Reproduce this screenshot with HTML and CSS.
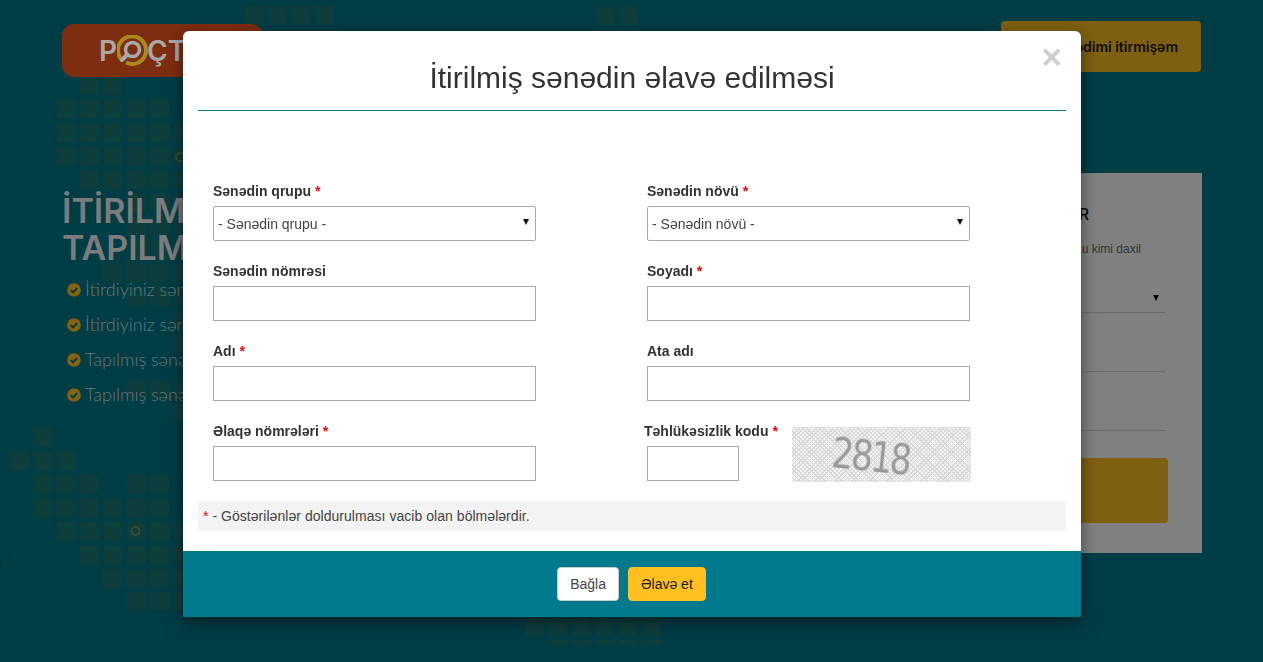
FILE: index.html
```html
<!DOCTYPE html>
<html lang="az">
<head>
<meta charset="utf-8">
<title>İtirilmiş sənədin əlavə edilməsi</title>
<link rel="stylesheet" href="styles.css">
</head>
<body>
<svg class="tiles" width="1263" height="662" viewBox="0 0 1263 662" aria-hidden="true">
  <g class="tile-rows">
    <path d="M268 -9H290"/>
    <path d="M245 15H338M596 16H638"/>
    <path d="M80 86H122"/>
    <path d="M57 109H169"/>
    <path d="M57 133H192"/>
    <path d="M57 156H192"/>
    <path d="M80 180H192"/>
    <path d="M127 203H192"/>
    <path d="M127 226H192"/>
    <path d="M127 250H192"/>
    <path d="M103 273H192"/>
    <path d="M127 296H192"/>
    <path d="M173 320H192"/>
    <path d="M173 343H192"/>
    <path d="M127 390H192"/>
    <path d="M173 413H192"/>
    <path d="M33 437H52"/>
    <path d="M10 461H76"/>
    <path d="M33 484H99M127 484H169"/>
    <path d="M33 508H169"/>
    <path d="M57 531H192"/>
    <path d="M80 555H192"/>
    <path d="M103 578H192"/>
    <path d="M127 601H192"/>
    <path d="M525 626H662"/>
  </g>
  <path class="tile-short" d="M549 642.5H662"/>
  <circle class="tile-dot" cx="135.500" cy="531" r="4"/>
  <circle class="tile-dot" cx="180" cy="157" r="4"/>
  <rect class="edge-mark" x="1" y="558" width="1" height="10"/>
</svg>

<div class="page">
  <header class="top">
    <a class="logo">
      <span>P</span>
      <svg class="logo-o" width="31" height="31" viewBox="0 0 31 31" aria-hidden="true">
        <path class="logo-ring" d="M5 25A14 14 0 1 1 25 25A14 14 0 0 1 9 27.500"/>
        <circle class="logo-lens" cx="15.500" cy="14.500" r="7"/>
        <path class="logo-handle" d="M10 20L5 25"/>
      </svg>
      <span>ÇTAP</span>
    </a>
    <a class="lost-btn">Sənədimi itirmişəm</a>
  </header>
  <main class="content">
    <section class="hero">
      <h1>İTİRİLMİŞ VƏ<br>TAPILMIŞ SƏNƏDLƏR</h1>
      <ul class="perks">
        <li><svg class="tick" width="14" height="14" viewBox="0 0 14 14"><circle cx="7" cy="7" r="6.800"/><path d="M3.800 7.200L6.100 9.400L10.200 5"/></svg>İtirdiyiniz sənədi elan edin</li>
        <li><svg class="tick" width="14" height="14" viewBox="0 0 14 14"><circle cx="7" cy="7" r="6.800"/><path d="M3.800 7.200L6.100 9.400L10.200 5"/></svg>İtirdiyiniz sənədi axtarın</li>
        <li><svg class="tick" width="14" height="14" viewBox="0 0 14 14"><circle cx="7" cy="7" r="6.800"/><path d="M3.800 7.200L6.100 9.400L10.200 5"/></svg>Tapılmış sənədi elan edin</li>
        <li><svg class="tick" width="14" height="14" viewBox="0 0 14 14"><circle cx="7" cy="7" r="6.800"/><path d="M3.800 7.200L6.100 9.400L10.200 5"/></svg>Tapılmış sənədi qaytarın</li>
      </ul>
    </section>
    <aside class="search">
      <h2>SƏNƏD AXTAR</h2>
      <p>Axtardığınız sənədi onu kimi daxil</p>
      <div class="search-line search-select"></div>
      <div class="search-line"></div>
      <div class="search-line"></div>
      <div class="search-submit"></div>
    </aside>
  </main>
</div>

<div class="modal" role="dialog">
  <span class="close">×</span>
  <div class="modal-head">
    <h3>İtirilmiş sənədin əlavə edilməsi</h3>
  </div>
  <form class="modal-form">
    <div class="field">
      <label>Sənədin qrupu <b>*</b></label>
      <div class="select-wrap"><select><option>- Sənədin qrupu -</option></select></div>
    </div>
    <div class="field">
      <label>Sənədin növü <b>*</b></label>
      <div class="select-wrap"><select><option>- Sənədin növü -</option></select></div>
    </div>
    <div class="field">
      <label>Sənədin nömrəsi</label>
      <input type="text">
    </div>
    <div class="field">
      <label>Soyadı <b>*</b></label>
      <input type="text">
    </div>
    <div class="field">
      <label>Adı <b>*</b></label>
      <input type="text">
    </div>
    <div class="field">
      <label>Ata adı</label>
      <input type="text">
    </div>
    <div class="field">
      <label>Əlaqə nömrələri <b>*</b></label>
      <input type="text">
    </div>
    <div class="captcha-row">
      <div class="captcha-field">
        <label>Təhlükəsizlik kodu <b>*</b></label>
        <input type="text">
      </div>
      <div class="captcha"><span>2818</span></div>
    </div>
  </form>
  <p class="note"><b>*</b> - Göstərilənlər doldurulması vacib olan bölmələrdir.</p>
  <div class="modal-foot">
    <button type="button" class="btn btn-light">Bağla</button>
    <button type="button" class="btn btn-yellow">Əlavə et</button>
  </div>
</div>
</body>
</html>
```
FILE: styles.css
```css
* { box-sizing: border-box; }
html, body { margin: 0; height: 100%; }
body {
  position: relative;
  height: 662px;
  overflow: hidden;
  background: #003d45;
  font-family: "Liberation Sans", "DejaVu Sans", sans-serif;
}

/* decorative pixel map behind the page */
.tiles { position: absolute; left: 0; top: 0; }
.tile-rows path {
  fill: none;
  stroke: #0e3e3c;
  stroke-width: 18.500;
  stroke-dasharray: 19 4.400;
}
.tile-short { fill: none; stroke: #0e3e3c; stroke-width: 5; stroke-dasharray: 19 4.400; }
.tile-dot { fill: none; stroke: #4a4f2c; stroke-width: 1.500; }
.edge-mark { fill: #0d2026; }

.page {
  position: relative;
  display: flex;
  flex-direction: column;
  padding: 21px 61px 0 62px;
}
.top {
  display: flex;
  justify-content: space-between;
  align-items: flex-start;
  height: 51px;
}
.logo {
  display: flex;
  align-items: center;
  gap: 0;
  width: 201px;
  height: 53px;
  margin-top: 3px;
  padding-left: 37px;
  border-radius: 12px;
  background: #7f2d10;
  color: #a9a9a9;
  font: 600 28px "Inter", "Liberation Sans", sans-serif;
}
.logo-o { flex: none; margin: 0 -1px 0 0; }
.logo-ring { fill: none; stroke: #a88b1a; stroke-width: 4; }
.logo-lens { fill: none; stroke: #a9a9a9; stroke-width: 3.500; }
.logo-handle { fill: none; stroke: #a9a9a9; stroke-width: 4; stroke-linecap: round; }
.lost-btn {
  display: flex;
  align-items: center;
  justify-content: flex-end;
  width: 200px;
  height: 51px;
  margin-right: 1px;
  padding-right: 23px;
  border-radius: 4px;
  background: #7f5f10;
  color: #0e0c05;
  font: 600 14px "Inter", "DejaVu Sans", sans-serif;
}

.content {
  display: flex;
  justify-content: space-between;
  align-items: flex-start;
  margin-top: 101px;
}
.hero { padding-top: 19px; white-space: nowrap; }
.hero h1 {
  margin: 0;
  color: #7c7c7c;
  font: 600 34px/37px "Inter", "Liberation Sans", sans-serif;
}
.perks {
  list-style: none;
  margin: 6px 0 0;
  padding: 0 0 0 5px;
  color: #6b797c;
  font: 300 18px/35px "Lato", "Open Sans", sans-serif;
}
.perks li { display: flex; align-items: center; gap: 4px; }
.tick { flex: none; }
.tick circle { fill: #85630f; }
.tick path { fill: none; stroke: #003d45; stroke-width: 2; }

.search {
  display: flex;
  flex-direction: column;
  width: 340px;
  height: 380px;
  padding: 31px 36px 0 34px;
  background: #808080;
}
.search h2 {
  margin: 0;
  padding-right: 77px;
  text-align: right;
  color: #0e0e0e;
  font: 500 16px/20px "Inter", "Liberation Sans", sans-serif;
  white-space: nowrap;
}
.search p {
  margin: 17px 0 0;
  padding-right: 25px;
  text-align: right;
  color: #333;
  font: 12px/16px "Liberation Sans", sans-serif;
  white-space: nowrap;
}
.search-line { position: relative; height: 59px; border-bottom: 1px solid #6a6a6a; }
.search-line.search-select { height: 56px; }
.search-select::after {
  content: "";
  position: absolute;
  right: 7px;
  top: 38px;
  border-left: 3px solid transparent;
  border-right: 3px solid transparent;
  border-top: 6px solid #050505;
}
.search-submit {
  height: 65px;
  margin: 27px -2px 0 0;
  border-radius: 4px;
  background: #7f5f10;
}

/* dialog */
.modal {
  position: fixed;
  left: 183px;
  top: 31px;
  display: flex;
  flex-direction: column;
  width: 898px;
  height: 586px;
  border-radius: 6px 6px 0 0;
  background: #fff;
  box-shadow: 0 5px 15px rgba(0, 0, 0, .5);
  color: #333;
}
.close {
  position: absolute;
  right: 19px;
  top: 6px;
  color: #cfcfcf;
  font: 700 35px/40px "Liberation Sans", sans-serif;
}
.modal-head {
  height: 80px;
  margin: 0 15px;
  border-bottom: 1px solid #007a8c;
  text-align: center;
}
.modal-head h3 {
  margin: 0;
  padding-top: 29px;
  font: 400 30px/36px "Liberation Sans", "DejaVu Sans", sans-serif;
}
.modal-form {
  display: grid;
  grid-template-columns: 434px 1fr;
  grid-auto-rows: 59px;
  row-gap: 21px;
  padding: 71px 0 20px 30px;
}
.field, .captcha-field { display: flex; flex-direction: column; }
label {
  display: block;
  height: 24px;
  padding-top: 1px;
  color: #333;
  font: 700 14px/17px "Liberation Sans", "DejaVu Sans", sans-serif;
  white-space: nowrap;
}
label b, .note b { color: #f00; font-weight: 700; }
input, select {
  display: block;
  width: 323px;
  height: 35px;
  border: 1px solid #a9a9a9;
  background: #fff;
  font: 14px "Liberation Sans", "DejaVu Sans", sans-serif;
  color: #444;
  outline: 0;
}
input { border-radius: 0; }
select { appearance: none; padding: 0 0 0 4px; border-radius: 2px; }
.select-wrap { position: relative; width: 323px; }
.select-wrap::after {
  content: "";
  position: absolute;
  right: 7px;
  top: 13px;
  border-left: 3px solid transparent;
  border-right: 3px solid transparent;
  border-top: 6px solid #111;
}
.captcha-row { display: flex; }
.captcha-field { width: 145px; }
.captcha-field label { margin-left: -3px; }
.captcha-field input { width: 92px; }
.captcha {
  display: flex;
  align-items: center;
  width: 179px;
  height: 55px;
  margin-top: 5px;
  padding-left: 40px;
  background-color: #f2f2f2;
  background-image: repeating-linear-gradient(45deg, #d8d8d8 0 1px, transparent 1px 3px), repeating-linear-gradient(-45deg, #d8d8d8 0 1px, transparent 1px 3px);
}
.captcha span {
  display: block;
  color: #999;
  font: 400 42px/46px "DejaVu Sans", sans-serif;
  letter-spacing: -3px;
  transform: translateY(-2px) rotate(6deg) scaleX(.82);
  transform-origin: left center;
}
.note {
  height: 30px;
  margin: 0 15px 20px;
  padding-left: 5px;
  background: #f3f3f3;
  color: #444;
  font: 14px/31px "Liberation Sans", "DejaVu Sans", sans-serif;
  letter-spacing: .04px;
}
.note b { font-weight: 400; }
.modal-foot {
  display: flex;
  justify-content: center;
  gap: 9px;
  height: 66px;
  padding-top: 16px;
  padding-right: 1px;
  background: #007a8c;
}
.btn {
  height: 34px;
  padding: 0 12px;
  border: 1px solid #ccc;
  border-radius: 4px;
  font: 14px "Liberation Sans", "DejaVu Sans", sans-serif;
}
.btn-light { background: #fff; color: #444; }
.btn-yellow { border-color: #ffc020; background: #ffc020; color: #222; }
```
